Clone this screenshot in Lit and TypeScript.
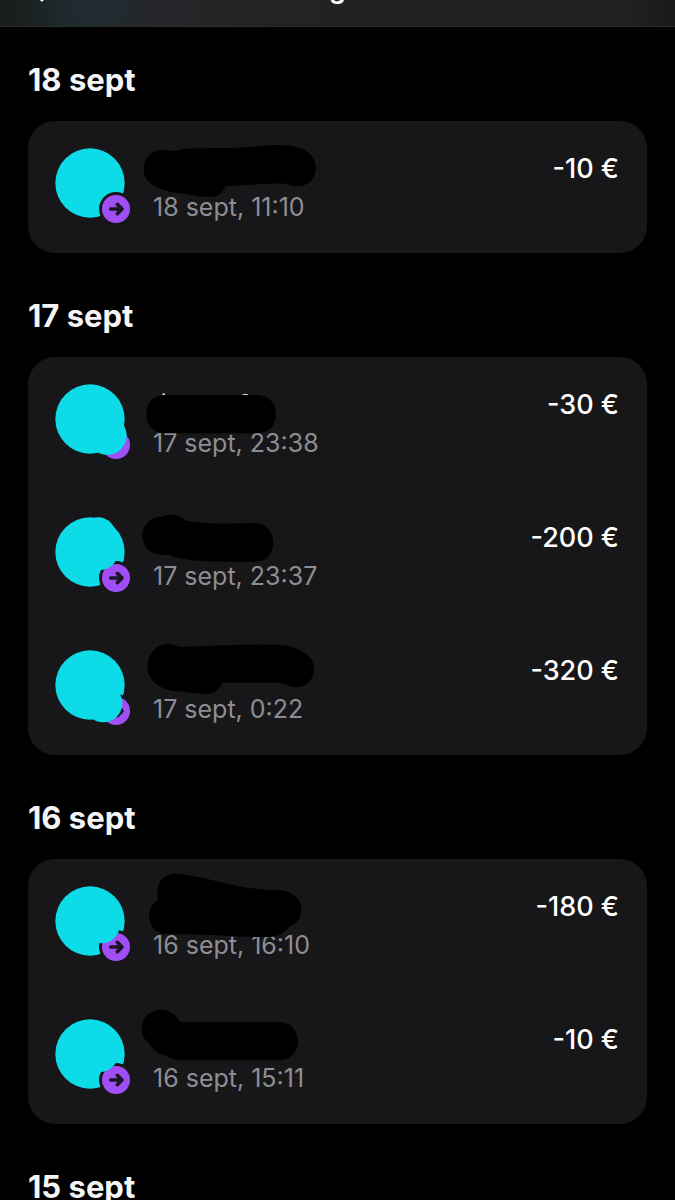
import { LitElement, html, svg, css } from "lit";
import { customElement, property } from "lit/decorators.js";

interface Dot { x: number; y: number; r: number }
interface Transfer {
  amount: string;
  when: string;
  ring: boolean;
  dots: Dot[];
  originY: number;
  mask: string;
  traces?: string;
}
interface Day { label: string; items: Transfer[] }

const days: Day[] = [
  {
    label: "18 sept",
    items: [
      {
        amount: "-10 €", when: "18 sept, 11:10", ring: true, dots: [], originY: 114,
        mask: "M371 178C371 142 396 120 428 120C440 120 450 121 458 124C480 118 505 115 530 115L640 114L745 106C785 104 820 105 846 117C874 129 887 148 887 174C887 208 864 229 832 229C818 229 806 224 796 221C770 219 750 221 730 222L616 229C610 248 596 261 574 261C548 260 520 256 492 251C460 248 432 243 408 231C384 219 371 202 371 178Z",
      },
    ],
  },
  {
    label: "17 sept",
    items: [
      {
        amount: "-30 €", when: "17 sept, 23:38", ring: false, dots: [{ x: 157, y: 155, r: 58 }], originY: 42,
        mask: "M379 132C379 96 402 75 434 75H704C745 75 768 98 768 132C768 168 744 190 708 190H436C402 190 379 168 379 132Z",
        traces: "M426 77L428 70H434L436 77ZM662 77Q675 66 690 77Z",
      },
      {
        amount: "-200 €", when: "17 sept, 23:37", ring: true,
        dots: [{ x: 130, y: 53, r: 52 }, { x: 135, y: 105, r: 54 }], originY: 51,
        mask: "M367 108C367 74 390 50 424 50C450 41 478 42 498 63C530 65 560 70 600 71L704 69C740 69 760 96 760 128C760 162 738 184 704 185H650C590 184 535 185 488 176C474 174 458 173 448 164C436 166 422 166 408 161C382 152 367 134 367 108Z",
      },
      {
        amount: "-320 €", when: "17 sept, 0:22", ring: true, dots: [{ x: 145, y: 160, r: 57 }, { x: 130, y: 120, r: 66 }], originY: 60,
        mask: "M383 110C383 70 408 42 444 42C460 42 470 47 482 51L640 45C700 43 758 42 800 47C848 59 882 78 882 114C882 148 862 171 830 171C812 172 796 164 780 158H607C598 178 584 192 554 192C526 191 500 187 474 184C420 181 383 152 383 110Z",
      },
    ],
  },
  {
    label: "16 sept",
    items: [
      {
        amount: "-180 €", when: "16 sept, 16:10", ring: true, dots: [{ x: 140, y: 118, r: 54 }], originY: 78,
        mask: "M412 97C412 62 435 41 468 41C492 41 515 47 540 52L650 77C694 85 728 89 762 90C806 87 844 110 844 148C844 176 828 191 808 199C796 217 778 231 748 231H690L580 225L440 222C410 222 387 198 387 168C387 148 396 130 415 119C413 112 412 105 412 97Z",
      },
      {
        amount: "-10 €", when: "16 sept, 15:11", ring: true, dots: [{ x: 135, y: 105, r: 54 }], originY: 57,
        mask: "M365 88C365 54 390 29 424 29C450 30 468 43 478 64C488 66 500 66 510 66H776C812 66 834 92 834 123C834 158 810 181 776 181H478C462 180 450 174 440 168C412 162 398 148 388 130C374 120 365 106 365 88Z",
      },
    ],
  },
  { label: "15 sept", items: [] },
];

@customElement("transfer-row")
class TransferRow extends LitElement {
  @property({ attribute: false }) item!: Transfer;

  static styles = css`
    :host { display: flex; height: 132px; padding: 27px 28px 0 27px; box-sizing: border-box; }
    .avatar { flex: none; width: 80px; height: 80px; }
    .details { flex: 1; margin-left: 18px; display: flex; flex-direction: column; }
    .name { position: relative; z-index: 1; display: block; width: 160px; height: 40px; overflow: visible; }
    .when { color: #8e8e92; font-size: 25px; line-height: 38px; white-space: nowrap; }
    .amount { color: #fff; font-size: 27px; font-weight: 500; line-height: 42px; white-space: nowrap; }
  `;

  render() {
    const t = this.item;
    return html`
      <svg class="avatar" viewBox="0 0 240 240" aria-hidden="true">
        <circle cx="105" cy="105" r="104" fill="#0edbe8" />
        ${t.ring ? svg`<circle cx="183" cy="183" r="51" fill="#171719" />` : ""}
        <circle cx="183" cy="183" r="42" fill="#a04ff7" />
        <path d="M167 183H199M187 169L201 183L187 197" fill="none" stroke="#1b1524" stroke-width="11" stroke-linecap="round" stroke-linejoin="round" />
        ${t.dots.map((d) => svg`<circle cx=${d.x} cy=${d.y} r=${d.r} fill="#0edbe8" />`)}
      </svg>
      <div class="details">
        <svg class="name" viewBox="399 ${t.originY} 480 120" aria-hidden="true">
          ${t.traces ? svg`<path d=${t.traces} fill="#ccc" />` : ""}
          <path d=${t.mask} fill="#000" />
        </svg>
        <time class="when">${t.when}</time>
      </div>
      <span class="amount">${t.amount}</span>
    `;
  }
}

@customElement("app-root")
class AppRoot extends LitElement {
  static styles = css`
    :host { display: block; height: 100vh; overflow: hidden; background: #000; color: #f5f5f7; font-family: Inter, "Liberation Sans", sans-serif; }
    .bar {
      display: flex; justify-content: center; position: relative; height: 27px; box-sizing: border-box; overflow: hidden;
      border-bottom: 1px solid #2c2c2d;
      background: radial-gradient(ellipse 60px 40px at 14% 40%, #202d34, transparent), linear-gradient(90deg, #191c1b 0, #1c2627 9%, #252629 22%, #222223 50%, #212122 92%, #19191a 100%);
    }
    .back { position: absolute; left: 28px; top: -24px; width: 16px; height: 26px; }
    .title { margin: -27px 0 0; font-size: 27px; font-weight: 600; line-height: 32px; color: #fff; }
    .list { display: flex; flex-direction: column; gap: 43px; padding: 33px 28px; }
    .day { margin: 0; font-size: 31px; font-weight: 700; line-height: 40px; }
    .card { display: flex; flex-direction: column; gap: 1px; margin-top: 21px; border-radius: 27px; background: #171719; }
  `;

  render() {
    return html`
      <header class="bar">
        <svg class="back" viewBox="0 0 16 26" aria-hidden="true">
          <path d="M14 2L3 13L14 24" fill="none" stroke="#fff" stroke-width="3" stroke-linecap="round" />
        </svg>
        <h1 class="title">g</h1>
      </header>
      <main class="list">
        ${days.map((d) => html`
          <section>
            <h2 class="day">${d.label}</h2>
            ${d.items.length
              ? html`<div class="card">${d.items.map((i) => html`<transfer-row .item=${i}></transfer-row>`)}</div>`
              : ""}
          </section>
        `)}
      </main>
    `;
  }
}
